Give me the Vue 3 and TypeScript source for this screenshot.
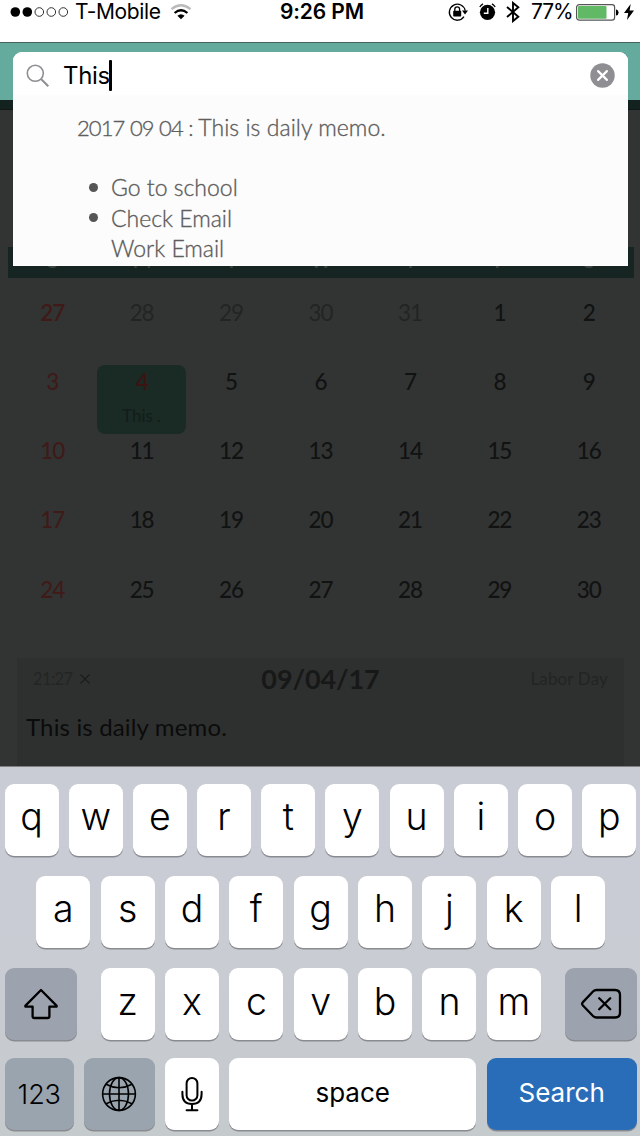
<script setup lang="ts">
import { ref } from 'vue'

interface Day { n: number; tone: string; memo?: string }

const query = ref('This')
const weekdays = ['S', 'M', 'T', 'W', 'T', 'F', 'S']
const numbers = [27, 28, 29, 30, 31, ...Array.from({ length: 30 }, (_, i) => i + 1)]
const days: Day[] = numbers.map((n, i) => ({
  n,
  tone: i === 8 ? 'picked' : i % 7 === 0 ? (i === 0 ? 'sun first' : 'sun') : i < 5 ? 'out' : 'in',
  memo: i === 8 ? 'This .' : undefined,
}))
const row1 = 'qwertyuiop'.split('')
const row2 = 'asdfghjkl'.split('')
const row3 = 'zxcvbnm'.split('')
</script>

<template>
  <div class="screen">
    <header class="status">
      <div class="st-left">
        <svg class="dots" width="60" height="12" viewBox="0 0 60 12">
          <circle cx="5.3" cy="6" r="4.8" /><circle cx="17.3" cy="6" r="4.8" />
          <circle class="o" cx="29.3" cy="6" r="4.3" /><circle class="o" cx="41.3" cy="6" r="4.3" /><circle class="o" cx="53.3" cy="6" r="4.3" />
        </svg>
        <span class="carrier">T-Mobile</span>
        <svg class="wifi" width="22" height="16" viewBox="0 0 22 16" fill="none" stroke-width="2.3">
          <path d="M1.5 5.1Q11 -2.6 20.5 5.1" stroke="#bbb" />
          <path d="M4.6 9Q11 3.5 17.4 9" stroke="#000" />
          <path d="M7.4 11.7Q11 8.7 14.6 11.7L11 15.2Z" fill="#000" />
        </svg>
      </div>
      <span class="time">9:26 PM</span>
      <div class="st-right">
        <svg width="20" height="20" viewBox="0 0 20 20">
          <path d="M16 14.7A8 8 0 1 1 17.2 8.6" fill="none" stroke="#000" stroke-width="1.3" />
          <path d="M14 8.5H20L17 12.5Z" /><rect x="5.2" y="8.8" width="8" height="5.6" rx=".6" />
          <path d="M6.8 9V7.3a2.4 2.4 0 0 1 4.8 0V9" fill="none" stroke="#000" stroke-width="1.3" />
        </svg>
        <svg class="alarm" width="17" height="18" viewBox="0 0 17 18">
          <circle cx="8.5" cy="9.3" r="7.6" />
          <path d="M.8 4A9 9 0 0 1 4 .9M13 .9A9 9 0 0 1 16.2 4" fill="none" stroke="#000" stroke-width="1.3" />
          <path d="M8.8 5V10.2H4.8" fill="none" stroke="#fff" stroke-width="1.4" />
        </svg>
        <svg class="bt" width="14" height="22" viewBox="0 0 14 22" fill="none" stroke="#000" stroke-width="1.9"><path d="M1 6L12.3 15.7L7 20.1V1.9L12.3 6.3L1 16" /></svg>
        <span class="pct">77%</span>
        <svg class="batt" width="43" height="17" viewBox="0 0 43 17">
          <rect x=".6" y=".6" width="38" height="15.6" rx="2.6" fill="#fff" stroke="#555" stroke-width="1.2" />
          <rect x="2" y="2" width="28.5" height="12.8" rx="1" fill="#62b965" /><path d="M40 5.2q2.6 .7 2.6 3.2t-2.6 3.2z" />
        </svg>
        <svg class="bolt" width="10" height="16" viewBox="0 0 10 16"><path d="M6.7 0L0 9H4.2L3 16L10 6.4H5.6Z" /></svg>
      </div>
    </header>
    <div class="nav"></div>
    <div class="nav-shade"></div>

    <main class="calendar">
      <div class="week"><span v-for="(w, i) in weekdays" :key="i">{{ w }}</span></div>
      <div class="grid">
        <div v-for="(d, i) in days" :key="i" class="day" :class="d.tone">
          <span class="num">{{ d.n }}</span>
          <span v-if="d.memo" class="note">{{ d.memo }}</span>
        </div>
      </div>
      <section class="memo">
        <div class="memo-head">
          <span class="clock">21:27
            <svg width="10" height="10" viewBox="0 0 10 10"><path d="M.5 .5L9.5 9.5M9.5 .5L.5 9.5" stroke="#1b1c1c" stroke-width="1.3" /></svg>
          </span>
          <span class="date">09/04/17</span>
          <span class="holiday">Labor Day</span>
        </div>
        <p class="memo-text">This is daily memo.</p>
      </section>
    </main>

    <section class="search">
      <div class="field">
        <svg class="lens" width="24" height="24" viewBox="0 0 24 24" fill="none" stroke="#8e8e93"><circle cx="9.3" cy="9.3" r="8" stroke-width="1.6" /><path d="M15 15L22.3 22.3" stroke-width="2" /></svg>
        <span class="query">{{ query }}</span><i class="caret"></i>
        <svg class="clear" width="25" height="25" viewBox="0 0 25 25"><circle cx="12.5" cy="12.5" r="12.2" fill="#8e8e93" /><path d="M8.1 8.1L16.9 16.9M16.9 8.1L8.1 16.9" stroke="#fff" stroke-width="2.2" stroke-linecap="round" /></svg>
      </div>
      <div class="result">
        <p class="title"><span class="when">2017 09 04 :</span> This is daily memo.</p>
        <p class="item"><i></i><span>Go to school</span></p>
        <p class="item"><i></i><span>Check Email</span></p>
        <p class="item sub"><span>Work Email</span></p>
      </div>
    </section>

    <section class="keyboard">
      <div class="row"><div v-for="k in row1" :key="k" class="key"><span>{{ k }}</span></div></div>
      <div class="row second"><div v-for="k in row2" :key="k" class="key"><span>{{ k }}</span></div></div>
      <div class="row third">
        <div class="key grey shift">
          <svg width="36" height="32" viewBox="0 0 36 32" fill="none" stroke="#000" stroke-width="2.3" stroke-linejoin="round"><path d="M18 2L33.5 17.6Q34 18.7 33 18.7H26.4V28.2Q26.4 30 24.6 30H11.4Q9.6 30 9.6 28.2V18.7H3Q2 18.7 2.5 17.6Z" /></svg>
        </div>
        <div class="letters"><div v-for="k in row3" :key="k" class="key"><span>{{ k }}</span></div></div>
        <div class="key grey shift">
          <svg width="42" height="32" viewBox="0 0 42 32" fill="none" stroke="#000" stroke-width="2.3" stroke-linecap="round" stroke-linejoin="round"><path d="M16.5 2H35Q40 2 40 7V24.5Q40 29.5 35 29.5H16.5Q14.5 29.5 13 28L2.7 17.2Q1.5 15.8 2.7 14.4L13 3.5Q14.5 2 16.5 2ZM19.2 10.2L30.2 21.2M30.2 10.2L19.2 21.2" /></svg>
        </div>
      </div>
      <div class="row last">
        <div class="key cool numkey"><span class="label n123">123</span></div>
        <div class="key cool globe">
          <svg width="36" height="36" viewBox="0 0 36 36" fill="none" stroke="#000" stroke-width="1.6"><circle cx="18" cy="18" r="16.4" /><ellipse cx="18" cy="18" rx="9.5" ry="16.4" /><path d="M18 1.4V34.6M1.4 18H34.6M5 8.2Q18 15.2 31 8.2M5 27.8Q18 20.8 31 27.8" /></svg>
        </div>
        <div class="key mic">
          <svg width="22" height="36" viewBox="0 0 22 36" fill="none" stroke="#000" stroke-width="2" stroke-linecap="round"><rect x="5.6" y="2" width="10.8" height="22.6" rx="5.4" /><path d="M1.4 15.8V18Q1.4 28 11 28T20.6 18V15.8M11 28V34M5.6 34.2H16.4" /></svg>
        </div>
        <div class="key space"><span class="label spc">space</span></div>
        <div class="key blue"><span class="label srch">Search</span></div>
      </div>
    </section>
  </div>
</template>

<style>
html, body { margin: 0; }
</style>

<style scoped>
* { box-sizing: border-box; }
p { margin: 0; }
svg { display: block; flex: none; }
span { white-space: nowrap; }
.screen { position: relative; width: 640px; height: 1136px; overflow: hidden; display: flex; flex-direction: column; background: #323433; font-family: Inter, "Liberation Sans", sans-serif; }
.status { height: 42px; flex: none; background: #fff; display: grid; grid-template-columns: 1fr auto 1fr; padding: 0 6px 0 10px; }
.st-left, .st-right { height: 24px; display: flex; align-items: center; }
.st-right { justify-content: flex-end; }
.carrier { font-size: 21px; margin-left: 5px; width: 84px; line-height: 24px; letter-spacing: -.35px; }
.wifi { margin-left: 11px; }
.time { font-size: 21px; font-weight: 600; line-height: 24px; letter-spacing: -.1px; }
.dots .o { fill: none; stroke: #333; stroke-width: 1; }
.alarm { margin-left: 11px; }
.bt { margin-left: 10px; }
.pct { font-size: 21px; margin-left: 11px; width: 40px; line-height: 24px; letter-spacing: -1.1px; }
.batt { margin-left: 5px; }
.bolt { margin-left: 5px; }
.nav { height: 58px; flex: none; background: #64ab9d; border-top: 1px solid #44635e; }
.nav-shade { height: 10px; flex: none; background: #14221f; border-bottom: 1px solid #101817; }
.calendar { height: 656px; flex: none; padding-top: 137px; font-family: Lato, "Open Sans", sans-serif; }
.week { margin: 0 6px 0 8px; height: 31px; background: #162521; display: grid; grid-template-columns: repeat(7, 1fr); text-align: center; color: #3c4442; font-size: 20px; font-weight: 600; line-height: 29px; }
.week span { margin-top: -1px; }
.grid { margin: 18px 6px 0 8px; display: grid; grid-template-columns: repeat(7, 1fr); grid-auto-rows: 69.15px; }
.day { display: flex; flex-direction: column; align-items: center; margin-right: 1px; color: #111212; }
.num { font-size: 22.5px; line-height: 34px; font-weight: 500; letter-spacing: -1.1px; }
.out { color: #222424; }
.out .num { font-weight: 400; }
.sun { color: #3f1a18; }
.first .num { font-weight: 600; }
.picked { background: #1a2a25; border-radius: 8px; color: #3a1512; }
.picked .num { font-weight: 600; }
.note { color: #131d1a; font-size: 17px; line-height: 34px; font-weight: 400; }
.memo { margin: 16.25px 16px 0 17px; height: 110px; background: #2e302f; }
.memo-head { height: 42px; display: grid; grid-template-columns: 1fr auto 1fr; align-items: center; padding: 0 16px; color: #1f2020; font-size: 17px; }
.clock { display: flex; align-items: center; gap: 8px; font-size: 16.5px; font-weight: 400; letter-spacing: -.6px; color: #232524; }
.date { font-size: 27px; font-weight: 700; color: #171818; letter-spacing: -.1px; }
.holiday { text-align: right; font-weight: 400; letter-spacing: .15px; color: #222423; }
.memo-text { padding-left: 9px; margin-top: 8px; font-size: 24px; line-height: 38px; letter-spacing: .15px; color: #0b0b0b; }
.search { position: absolute; left: 13px; top: 52px; width: 615px; height: 214px; background: #fcfcfc; border-radius: 9px 9px 0 0; border-bottom: 1px solid #fff; overflow: hidden; }
.field { height: 43px; background: #fff; display: flex; align-items: center; padding: 4px 13px 0; }
.query { font-size: 24px; margin-left: 13px; line-height: 38px; letter-spacing: -.3px; }
.caret { width: 3px; height: 31px; margin-left: -1px; border-radius: 1px; background: #000; }
.clear { margin-left: auto; }
.result { padding: 16.5px 0 0 64px; font-family: Lato, "Open Sans", sans-serif; font-size: 23px; line-height: 30.4px; font-weight: 300; color: #555; -webkit-text-stroke: .35px #666; }
.title { margin-bottom: 29.3px; letter-spacing: .05px; }
.when { font-size: 22px; letter-spacing: -.9px; word-spacing: .4px; }
.item { display: flex; align-items: center; padding-left: 12px; }
.item i { width: 9px; height: 9px; border-radius: 50%; background: #555; margin-right: 13px; }
.sub { padding-left: 34px; }
.keyboard { height: 370px; flex: none; border-top: 1px solid #7d7f83; background: linear-gradient(#c9ccd5, #c9ccd3 55%, #c5cacd); padding: 16.5px 3px 0 4.5px; display: flex; flex-direction: column; }
.row { display: flex; gap: 10.2px; height: 72px; margin-bottom: 20.4px; }
.second { padding-left: 31.8px; gap: 10.35px; }
.key { width: 54px; height: 72px; flex: none; border-radius: 9px; background: #fff; box-shadow: 0 1.5px 0 #898b8f; display: flex; align-items: center; justify-content: center; font-size: 37.5px; line-height: 46px; font-weight: 360; }
.key > span { margin-top: -5px; }
.third { justify-content: space-between; gap: 0; margin-bottom: 17.5px; }
.letters { display: flex; gap: 10.35px; }
.shift { width: 72px; }
.grey { background: #9ca2ae; }
.cool { background: #99a4af; }
.numkey { width: 69.5px; }
.globe { width: 70.5px; }
.space { width: 247.3px; }
.blue { width: 150.2px; background: #296db8; color: #fff; }
.key > .label { font-size: 26px; margin-top: 0; font-weight: 400; }
.key > .spc { margin-top: -1px; }
.key > .srch { margin-top: -1px; }
.key > .n123 { margin-top: 2px; font-size: 27px; letter-spacing: -.1px; font-weight: 350; }
</style>
